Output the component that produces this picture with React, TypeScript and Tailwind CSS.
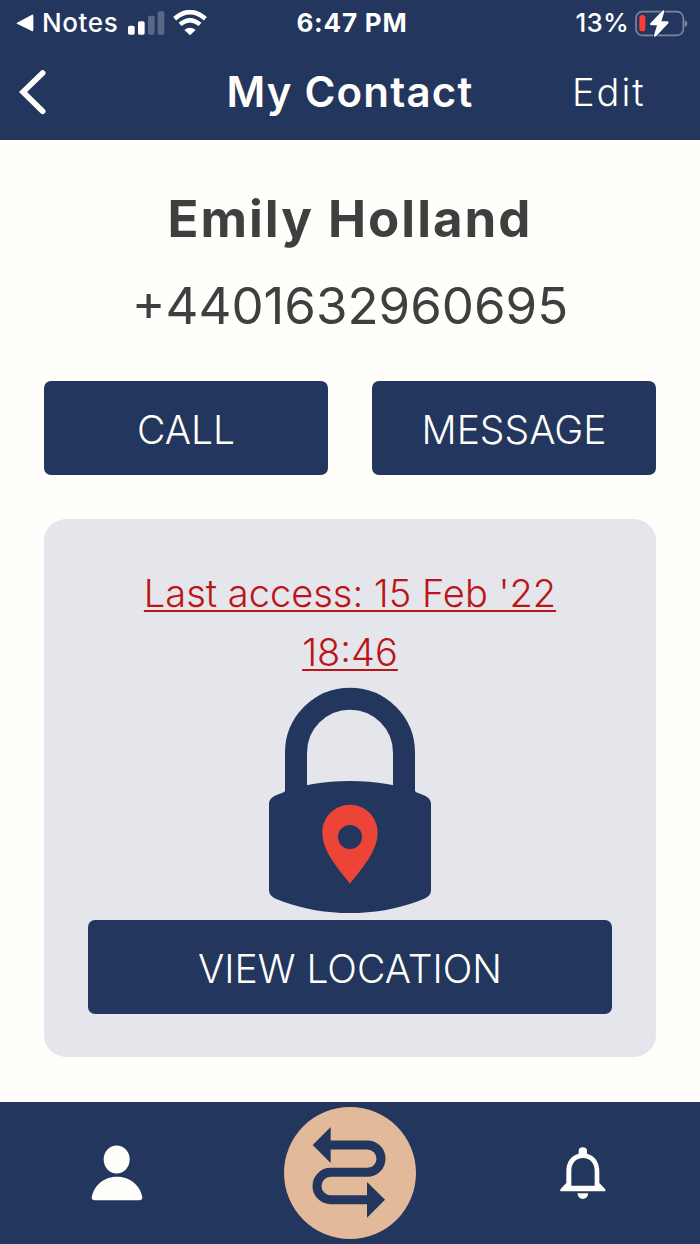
import type { ReactNode } from "react";

interface ActionButtonProps {
  children: ReactNode;
  className?: string;
}

function ActionButton({ children, className = "" }: ActionButtonProps) {
  return (
    <button
      className={`flex h-[94px] items-center justify-center rounded-[7px] bg-[#22365e] pt-[3px] text-[39px] font-light leading-none text-[#fffefa] cursor-pointer ${className}`}
    >
      {children}
    </button>
  );
}

function StatusBar() {
  return (
    <div className="grid h-[46px] grid-cols-3 items-center pl-4 pr-[12px] text-[26px] leading-none text-white">
      <div className="flex items-center">
        <svg width="18" height="18" viewBox="0 0 54 54">
          <path d="M3 26L48 2Q52 1 52 6V48Q52 53 47 51L3 29Q0 27 3 26Z" fill="currentColor" />
        </svg>
        <span className="ml-[8px] w-[78px] whitespace-nowrap font-medium tracking-[0.6px]">Notes</span>
        <svg className="ml-2" width="37" height="24" viewBox="0 0 111 72" fill="currentColor">
          <rect x="0" y="44" width="20" height="27" rx="5" />
          <rect x="30" y="31" width="20" height="40" rx="5" />
          <rect x="60" y="14" width="20" height="57" rx="5" opacity="0.25" />
          <rect x="89" y="1" width="20" height="70" rx="5" opacity="0.25" />
        </svg>
        <svg className="ml-[8px]" width="34" height="26" viewBox="0 0 102 78" fill="none" stroke="currentColor">
          <path d="M5 26Q51 -13 97 26" strokeWidth="14" />
          <path d="M21 43Q51 18 81 43" strokeWidth="13" />
          <path d="M51 76L34 60Q51 46 68 60Z" fill="currentColor" stroke="none" />
        </svg>
      </div>
      <span className="text-center font-bold tracking-[0.8px]">6:47 PM</span>
      <div className="flex items-center justify-end">
        <span className="font-medium tracking-[0.2px]">13%</span>
        <svg className="ml-[6px]" width="53" height="28" viewBox="0 0 159 84">
          <rect x="3" y="8" width="142" height="71" rx="19" fill="none" stroke="#7c879f" strokeWidth="5" />
          <rect x="13" y="18" width="18" height="49" rx="8" fill="#fc3d32" />
          <path d="M149 34Q157 36 157 44Q157 52 149 54Z" fill="#7c879f" />
          <path
            d="M82 5L46 43Q43 49 50 49H66L57 79Q57 86 64 81L100 43Q102 37 96 37H79L88 8Q88 2 82 5Z"
            fill="white"
            stroke="#22365e"
            strokeWidth="5"
            paintOrder="stroke"
          />
        </svg>
      </div>
    </div>
  );
}

function LockIcon() {
  return (
    <svg width="162" height="226" viewBox="57 21 486 678" className="shrink-0">
      <path d="M138 345V218A162 162 0 0 1 462 218V345" fill="none" stroke="#22365e" strokeWidth="66" />
      <path
        d="M57 372C57 352 75 346 98 338Q105 335 105 332C150 318 220 303 300 303C380 303 450 318 495 332Q495 335 502 338C525 346 543 352 543 372V630C543 650 525 656 500 665C440 687 370 699 300 699C230 699 160 687 100 665C75 656 57 650 57 630Z"
        fill="#22365e"
      />
      <path
        d="M300 374C254 374 217 411 217 457C217 510 255 555 300 611C345 555 383 510 383 457C383 411 346 374 300 374Z"
        fill="#ec4436"
      />
      <circle cx="300" cy="471" r="36" fill="#22365e" />
    </svg>
  );
}

function BottomNav() {
  return (
    <nav className="grid h-[142px] shrink-0 grid-cols-3 items-center bg-[#22365e] text-[#fffefa]">
      <button className="flex justify-center cursor-pointer" aria-label="Profile">
        <svg width="52" height="56" viewBox="61 43 156 168" fill="currentColor">
          <ellipse cx="138" cy="86.500" rx="39" ry="42" />
          <path d="M63 200C70 160 105 138 139 138C173 138 208 160 215 200Q215 209 206 209H72Q63 209 63 200Z" />
        </svg>
      </button>
      <button className="flex justify-center cursor-pointer" aria-label="Routes">
        <svg width="132" height="132" viewBox="42 38 396 396">
          <circle cx="240" cy="236" r="198" fill="#e2b999" />
          <path
            d="M175 152H292A41 41 0 0 1 292 234H182A41 41 0 0 0 182 316H296"
            fill="none"
            stroke="#22365e"
            strokeWidth="27"
          />
          <path d="M128 152L182 98V206ZM345 316L291 263V370Z" fill="#22365e" />
        </svg>
      </button>
      <button className="flex justify-center cursor-pointer" aria-label="Notifications">
        <svg width="46" height="52" viewBox="56 49 138 156" fill="currentColor">
          <path
            fillRule="evenodd"
            d="M112 61Q112 50 124.500 50Q137 50 137 61V69C160 75 174 94 174 122V157L192 176V182H57V176L75 157V122C75 94 89 75 112 69ZM90 165H160V120C160 98 146 82 125 82C104 82 90 98 90 120Z"
          />
          <path d="M108 188H141Q138 205 124.500 205Q111 205 108 188Z" />
        </svg>
      </button>
    </nav>
  );
}

export default function App() {
  return (
    <div className="flex h-[1244px] w-[700px] flex-col overflow-hidden bg-[#fffefa] font-['Inter',sans-serif]">
      <header className="h-[140px] shrink-0 bg-[#22365e]">
        <StatusBar />
        <div className="grid h-[92px] grid-cols-[150px_1fr_150px] items-center text-[#fffefa]">
          <button className="ml-[19px] w-7 cursor-pointer" aria-label="Back">
            <svg width="28" height="46" viewBox="0 0 84 138" fill="none">
              <path d="M71 12L12 69L71 127" stroke="currentColor" strokeWidth="17" strokeLinecap="round" />
            </svg>
          </button>
          <h1 className="text-center text-[42px] font-semibold leading-none tracking-[1.2px]">My Contact</h1>
          <button className="pl-[22px] text-left text-[38px] font-light leading-none tracking-[2px] cursor-pointer">
            Edit
          </button>
        </div>
      </header>

      <main className="flex flex-1 flex-col px-11 text-[#3f3f3f]">
        <h2 className="mt-[48px] text-center text-[51px] font-bold leading-[62px] tracking-[2px]">Emily Holland</h2>
        <p className="mt-[25px] text-center text-[51px] leading-[62px]">+4401632960695</p>

        <div className="mt-[44px] grid grid-cols-2 gap-11">
          <ActionButton>CALL</ActionButton>
          <ActionButton>MESSAGE</ActionButton>
        </div>

        <section className="mt-11 flex h-[538px] flex-col items-center rounded-[22px] bg-[#e5e6eb] px-11 pt-[45px]">
          <p className="mb-[5px] text-center text-[38px] font-light leading-[59px] text-[#bb1517] underline decoration-2 underline-offset-[3px]">
            Last access: 15 Feb '22
            <br />
            18:46
          </p>
          <LockIcon />
          <ActionButton className="mt-[7px] w-full">VIEW LOCATION</ActionButton>
        </section>
      </main>

      <BottomNav />
    </div>
  );
}
